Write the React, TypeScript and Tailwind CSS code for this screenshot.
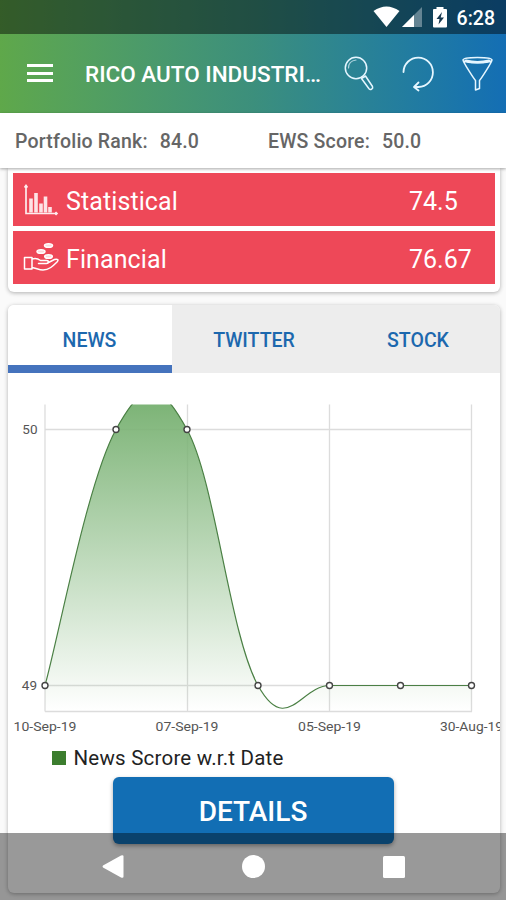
const SCORES = [
  { label: 'Statistical', value: '74.5', Icon: BarsIcon },
  { label: 'Financial', value: '76.67', Icon: HandCoinsIcon },
];

const TABS = ['NEWS', 'TWITTER', 'STOCK'];

const POINTS = [
  { x: 37, y: 312.5 },
  { x: 108, y: 56.5 },
  { x: 179, y: 56.5 },
  { x: 250, y: 312.5 },
  { x: 321.5, y: 312.5 },
  { x: 392.5, y: 312.5 },
  { x: 463.5, y: 312.5 },
];

const DATES = [
  { x: 37, label: '10-Sep-19' },
  { x: 179, label: '07-Sep-19' },
  { x: 321.5, label: '05-Sep-19' },
  { x: 463.5, label: '30-Aug-19' },
];

// cubic line through the points, intensity 0.2
function curve() {
  let d = `M${POINTS[0].x} ${POINTS[0].y}`;
  for (let i = 1; i < POINTS.length; i++) {
    const before = POINTS[Math.max(i - 2, 0)];
    const prev = POINTS[i - 1];
    const cur = POINTS[i];
    const next = POINTS[Math.min(i + 1, POINTS.length - 1)];
    d += ` C${prev.x + (cur.x - before.x) * 0.2} ${prev.y + (cur.y - before.y) * 0.2}`;
    d += ` ${cur.x - (next.x - prev.x) * 0.2} ${cur.y - (next.y - prev.y) * 0.2} ${cur.x} ${cur.y}`;
  }
  return d;
}

function BarsIcon() {
  return (
    <svg className="w-9 h-8" viewBox="0 0 36 32" fill="none" stroke="#fff">
      <path d="M3 1.500V29.500H34M1.500 3.500L3 1.500l1.500 2M32.500 28l1.500 1.500-1.500 1.500" strokeWidth="1.700" strokeOpacity=".9" />
      <path d="M8 28.500V14.500M13 28.500V9M18 28.500V19.500M22.500 28.500V12.500M27 28.500v-5.500" strokeWidth="3.600" strokeOpacity=".85" />
    </svg>
  );
}

function HandCoinsIcon() {
  return (
    <svg className="w-9 h-8" viewBox="0 0 36 32" fill="none" stroke="#fff" strokeWidth="1.500" strokeLinejoin="round" strokeLinecap="round">
      <path d="M1.500 15.500H9v11.500H1.500zM9 17c4-1.500 6-.500 8.500 1.500h6c2.500 0 2.500 3 0 3h-8M24.500 21l7-3.500c3-1 4.500.500 2.500 2.500-4 4-8 8-14 8-4 0-7-2-11-2.500" />
      <ellipse cx="25.500" cy="3.500" rx="4" ry="1.800" fill="#fff" fillOpacity=".8" />
      <ellipse cx="18" cy="9.500" rx="4" ry="1.800" fill="#fff" fillOpacity=".8" />
      <ellipse cx="25.500" cy="14.500" rx="3.800" ry="1.800" fill="#fff" fillOpacity=".8" />
    </svg>
  );
}

function StatusBar() {
  return (
    <div className="h-[34px] bg-black/45 relative">
      <svg className="block w-full h-full" viewBox="0 0 506 34" fill="#fff">
        <path d="M373.500 11q13-9 26 0L386.500 27z" />
        <path d="M402 27l20-20v20z" fillOpacity=".35" />
        <path d="M402 27l12-12v12z" />
        <path d="M436.500 7v2H434q-1 0-1 1v16.500q0 1 1 1h12q1 0 1-1V10q0-1-1-1h-2.500V7z" />
        <path d="M442 12l-5.500 7h3l-1 5.500 5.500-7h-3.300z" fill="#17384f" />
      </svg>
      <span className="absolute right-[11px] top-[7px] text-[19.500px] leading-6 font-medium">6:28</span>
    </div>
  );
}

function AppBar() {
  return (
    <div className="h-[79px] flex items-center pl-[27px]">
      <div className="w-[26px] -mt-px space-y-[4.5px]">
        <div className="h-[3px] bg-white" />
        <div className="h-[3px] bg-white" />
        <div className="h-[3px] bg-white" />
      </div>
      <h1 className="ml-8 mt-0.5 w-[245px] text-[22.500px] font-medium whitespace-nowrap">RICO AUTO INDUSTRI…</h1>
      <svg className="w-[176px] h-[70px] mt-[2px]" viewBox="330 40 176 70" fill="none" stroke="#e5f6ff" strokeWidth="1.500" strokeLinecap="round" strokeLinejoin="round">
        <circle cx="356" cy="68" r="10.700" />
        <path d="M348.500 68q0-7 7.500-8" strokeWidth="1.200" strokeOpacity=".7" />
        <path d="M361.500 78.500l4-2.500 7 10.500c1 2-2 4-3.500 2.300z" />
        <path d="M403.500 72a14.700 14.700 0 1 1 15 15h-4M418.500 82.500l-4.500 4.500 4.500 3.500" strokeWidth="1.800" />
        <path d="M463 60c0 2 11 19 12.500 20.500V90l4-1.500v-8C481 79 492 62 492 60M463 60c0-3.500 29-3.500 29 0s-29 3.500-29 0z" />
        <path d="M466 60.800q11.500 3 23 0" strokeWidth="2.500" />
      </svg>
    </div>
  );
}

function Chart() {
  const line = curve();
  return (
    <svg className="block w-[492px] h-[370px]" viewBox="0 0 492 370" fontFamily="Roboto, sans-serif">
      <defs>
        <linearGradient id="fade" gradientUnits="userSpaceOnUse" x1="0" y1="31" x2="0" y2="338">
          <stop offset="0" stopColor="#7db477" />
          <stop offset="1" stopColor="#7db477" stopOpacity="0" />
        </linearGradient>
        <clipPath id="plot">
          <path d="M37 31.500h427v307H37z" />
        </clipPath>
      </defs>
      <path d="M37 31.500v307M179.500 31.500v307M321.500 31.500v307M463.500 31.500v307M37 56.500h427M37 312.500h427M37 338.500h427" fill="none" stroke="#777" strokeOpacity=".26" strokeWidth="1.300" />
      <g clipPath="url(#plot)">
        <path d={`${line} L463.5 338 L37 338 Z`} fill="url(#fade)" />
        <path d={line} fill="none" stroke="#4b8045" strokeWidth="1.200" />
      </g>
      {POINTS.map((p) => (
        <circle key={p.x} cx={p.x} cy={p.y} r="3" fill="#fff" stroke="#444" strokeWidth="1.400" />
      ))}
      <g fontSize="13.500" fill="#555">
        <text x="29.500" y="61" textAnchor="end">50</text>
        <text x="29" y="317" textAnchor="end">49</text>
        {DATES.map((d) => (
          <text key={d.label} x={d.x} y="357.500" textAnchor="middle" textLength="63" lengthAdjust="spacingAndGlyphs">{d.label}</text>
        ))}
      </g>
    </svg>
  );
}

export default function App() {
  return (
    <div className="relative w-[506px] h-[900px] overflow-hidden bg-[#fafafa] font-[Roboto,sans-serif]">
      <header className="bg-linear-to-r from-[#5fa84a] via-[#3c8f7c] to-[#146eb4] text-white">
        <StatusBar />
        <AppBar />
      </header>

      <div className="relative z-10 h-[55px] bg-white shadow-[0_1px_3px_rgba(0,0,0,0.35)] flex items-center pl-[15px] text-[19.500px] font-medium text-[#666]">
        <div className="w-[253px] flex gap-3 pt-[3px] tracking-[0.18px]">
          <span>Portfolio Rank:</span>
          <span>84.0</span>
        </div>
        <div className="flex gap-3 pt-[3px] tracking-[0.18px]">
          <span>EWS Score:</span>
          <span>50.0</span>
        </div>
      </div>

      <section className="ml-[7.5px] mr-1.5 h-[123.5px] rounded-b-[6px] bg-white px-[5px] pt-[5px] space-y-[5px] shadow-[0_1px_4px_rgba(0,0,0,0.3)]">
        {SCORES.map(({ label, value, Icon }) => (
          <div key={label} className="h-[53px] bg-[#ee4858] flex items-center pl-[10px] text-white text-[25px]">
            <Icon />
            <span className="ml-[7.5px] w-[343px] pt-[4px] tracking-[0.1px]">{label}</span>
            <span className="pt-[4px]">{value}</span>
          </div>
        ))}
      </section>

      <section className="ml-2 mr-1.5 mt-[13.5px] h-[588px] rounded-[6px] bg-white overflow-hidden shadow-[0_1px_4px_rgba(0,0,0,0.3)]">
        <nav className="grid grid-cols-3 h-[68px] text-[19.500px] font-medium text-[#1c68ae]">
          {TABS.map((tab, i) => (
            <button key={tab} className={i === 0 ? 'bg-white border-b-8 border-[#4573bd] pt-[11px] pr-px' : 'bg-[#ededed] pt-[3px]'}>
              {tab}
            </button>
          ))}
        </nav>
        <Chart />
        <div className="flex items-center gap-2 h-[30px] pl-[43.5px] text-[20.500px] tracking-[0.22px] text-[#222]">
          <span className="w-[14px] h-[14px] -mt-px bg-[#3c7d2e]" />
          News Scrore w.r.t Date
        </div>
        <button className="block mx-auto mt-1 -translate-x-px w-[281px] h-[67px] rounded-[6px] bg-[#126eb4] text-white text-[28px] font-medium pt-0.5 shadow-[0_2px_4px_rgba(0,0,0,0.35)]">
          DETAILS
        </button>
      </section>

      <div className="absolute z-20 inset-x-0 bottom-0 h-[67px] bg-black/40">
        <svg className="block w-full h-full" viewBox="0 0 506 67" fill="#fff">
          <path d="M103 32.500q-1 1 0 2l18 10q2.500 1 2.500-1v-20q0-2-2.500-1z" />
          <circle cx="253.500" cy="33.500" r="11.500" />
          <rect x="383" y="23" width="22" height="22" rx="1.500" />
        </svg>
      </div>
    </div>
  );
}
